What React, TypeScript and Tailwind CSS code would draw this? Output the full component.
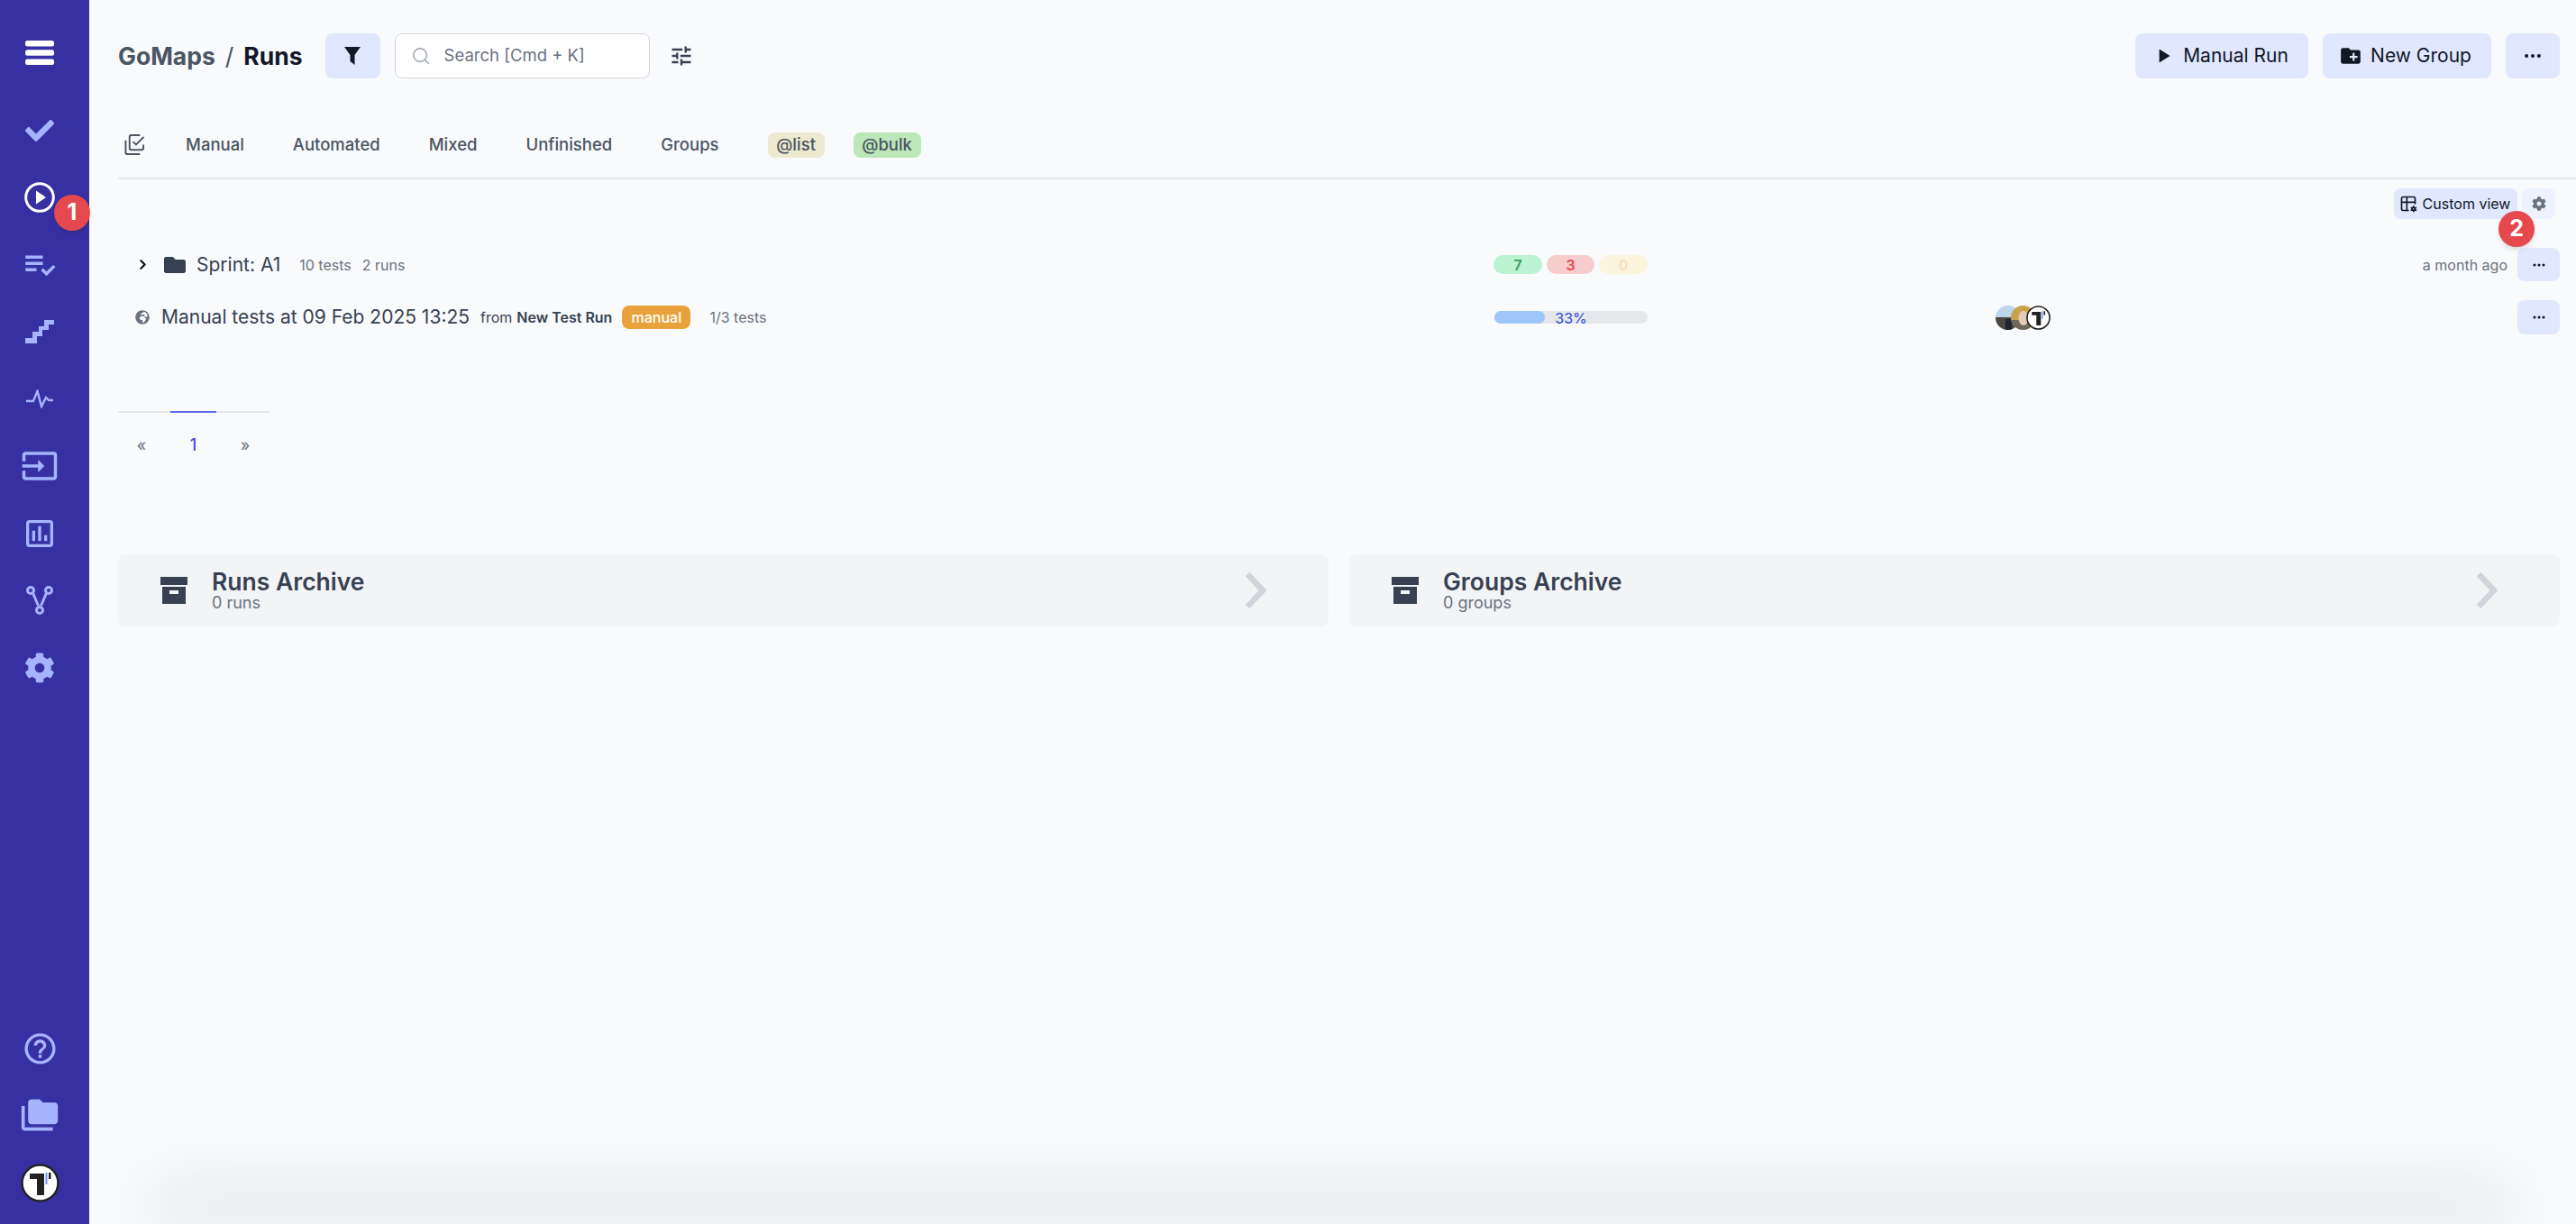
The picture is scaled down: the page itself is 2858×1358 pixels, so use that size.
import { Search } from "lucide-react"
import { BsThreeDots } from "react-icons/bs"
import { FaCheck, FaChevronRight, FaCog, FaFolder, FaGlobeAfrica } from "react-icons/fa"
import {
  MdCreateNewFolder,
  MdFolderCopy,
  MdHelpOutline,
  MdInput,
  MdOutlineAssessment,
  MdOutlineTune,
  MdPlayArrow,
  MdPlaylistAddCheck,
} from "react-icons/md"
import { TbTableOptions } from "react-icons/tb"

const tabs = ["Manual", "Automated", "Mixed", "Unfinished", "Groups"]

function Badge({ n, className }: { n: number; className: string }) {
  return (
    <span
      className={`absolute z-10 grid size-[40px] place-items-center rounded-full bg-[#e5484d] text-[25px] font-bold text-white shadow-md ${className}`}
    >
      {n}
    </span>
  )
}

function TLogo({ className }: { className: string }) {
  return (
    <svg viewBox="0 0 43 43" className={className}>
      <circle cx="21.5" cy="21.5" r="20" fill="#fff" stroke="#222" strokeWidth="2.5" />
      <path d="M10 11H26V35H18V17H10Z" fill="#222" />
      <rect x="27.5" y="10" width="2" height="13" fill="#6f8ff5" />
      <rect x="31" y="10" width="2.5" height="7" fill="#222" />
    </svg>
  )
}

function Archive() {
  return (
    <svg viewBox="0 0 30 30" className="h-[30px] w-[30px]" fill="#374151">
      <rect x="0" y="0" width="30" height="9" />
      <path d="M2 11H28V30H2ZM10 15V19H20V15Z" fillRule="evenodd" />
    </svg>
  )
}

function ArchiveCard({ title, sub }: { title: string; sub: string }) {
  return (
    <div className="flex h-[80px] items-center rounded-lg bg-[#f3f4f6] pl-[47px] pr-[69px]">
      <Archive />
      <div className="ml-[27px] flex flex-col pb-[3px]">
        <span className="text-[26.5px] leading-[30px] font-semibold text-[#374151]">{title}</span>
        <span className="text-[18px] leading-[18px] text-[#6b7280]">{sub}</span>
      </div>
      <svg viewBox="0 0 24 40" className="ml-auto h-[40px] w-[24px]" fill="none" stroke="#d1d5db" strokeWidth="6.5">
        <polyline points="3,2 20,20 3,38" />
      </svg>
    </div>
  )
}

function DotsButton({ height }: { height: string }) {
  return (
    <button className={`grid w-[47px] place-items-center rounded-lg bg-[#e0e7ff] text-[#111827] ${height}`}>
      <BsThreeDots size={16} />
    </button>
  )
}

function Sidebar() {
  const item = "flex h-[74.5px] items-center justify-center pr-[11px] text-[#a5b4fc]"
  return (
    <aside className="relative z-10 flex w-[99px] shrink-0 flex-col justify-between bg-[#3730a3] pb-[8px] pt-[21px]">
      <div className="flex flex-col">
        <div className={`${item} mb-[12px]`}>
          <svg viewBox="0 0 32 27" className="h-[27px] w-[32px]" fill="#fff">
            <rect width="32" height="6.5" rx="2.5" />
            <rect y="10.2" width="32" height="6.5" rx="2.5" />
            <rect y="20.5" width="32" height="6.5" rx="2.5" />
          </svg>
        </div>
        <div className={item}>
          <FaCheck size={32} />
        </div>
        <div className={`${item} relative`}>
          <svg viewBox="0 0 34 34" className="size-[34px]">
            <circle cx="17" cy="17" r="15.3" fill="none" stroke="#fff" strokeWidth="3" />
            <path d="M13 9.5L24 17L13 24.5Z" fill="#fff" />
          </svg>
          <Badge n={1} className="left-[60px] top-[34px]" />
        </div>
        <div className={item}>
          <MdPlaylistAddCheck size={42} />
        </div>
        <div className={item}>
          <svg viewBox="0 0 32 26" className="h-[26px] w-[32px]" fill="currentColor">
            <path d="M0 26V20H8V13H15V7H21V0H32V5H26V11H19V18H13V26Z" />
          </svg>
        </div>
        <div className={item}>
          <svg viewBox="0 0 30 21" className="h-[21px] w-[30px]" fill="none" stroke="currentColor" strokeWidth="2.4">
            <path d="M0 13H8L12.5 2L17 19L22 9L25 12H30" />
          </svg>
        </div>
        <div className={item}>
          <MdInput size={42} />
        </div>
        <div className={item}>
          <MdOutlineAssessment size={40} />
        </div>
        <div className={item}>
          <svg viewBox="0 0 30 32" className="h-[32px] w-[30px]" fill="none" stroke="currentColor" strokeWidth="3">
            <circle cx="5" cy="5" r="3.5" />
            <circle cx="25" cy="5" r="3.5" />
            <circle cx="15" cy="27" r="3.5" />
            <path d="M7.5 8L13.5 22M22.5 8L16.5 22" />
          </svg>
        </div>
        <div className={item}>
          <FaCog size={34} />
        </div>
      </div>
      <div className="flex flex-col">
        <div className={item}>
          <MdHelpOutline size={41} />
        </div>
        <div className={item}>
          <MdFolderCopy size={44} />
        </div>
        <div className={item}>
          <TLogo className="size-[43px]" />
        </div>
      </div>
    </aside>
  )
}

function Header() {
  return (
    <div className="flex h-[50px] items-center">
      <div className="flex items-center gap-[11px] pt-[2px] text-[26.5px] font-bold">
        <span className="text-[#4b5563]">GoMaps</span>
        <span className="font-normal text-[#4b5563]">/</span>
        <span className="text-[#111827]">Runs</span>
      </div>
      <button className="ml-[25px] grid h-[50px] w-[61px] place-items-center rounded-lg bg-[#e0e7ff]">
        <svg viewBox="0 0 18 20" className="h-[20px] w-[18px]" fill="#111827">
          <path d="M0 0H18L11.5 9V20L6.5 16V9Z" />
        </svg>
      </button>
      <div className="ml-[16px] flex h-[50px] w-[283px] items-center rounded-lg border border-[#d1d5db] bg-white pl-[17px]">
        <Search size={22} strokeWidth={1.6} className="text-[#9ca3af]" />
        <span className="ml-[15px] text-[18.5px] text-[#6b7280]">Search [Cmd + K]</span>
      </div>
      <MdOutlineTune size={28} className="ml-[21px] text-[#374151]" />
      <div className="ml-auto flex gap-[16px]">
        <button className="flex h-[50px] w-[192px] items-center justify-center gap-[9px] rounded-lg bg-[#e0e7ff] pr-[4px] text-[21px] text-[#111827]">
          <MdPlayArrow size={26} />
          Manual Run
        </button>
        <button className="flex h-[50px] w-[187px] items-center justify-center gap-[9px] rounded-lg bg-[#e0e7ff] pr-[4px] text-[21px] text-[#111827]">
          <MdCreateNewFolder size={26} />
          New Group
        </button>
        <button className="grid h-[50px] w-[60px] place-items-center rounded-lg bg-[#e0e7ff] text-[#111827]">
          <BsThreeDots size={22} />
        </button>
      </div>
    </div>
  )
}

function Tabs() {
  return (
    <div className="flex h-[112px] items-center border-b-2 border-[#e5e7eb] pl-[7px] pt-[37px] text-[18.5px] font-medium text-[#4b5563]">
      <svg viewBox="0 0 24 24" className="size-[23px]" fill="none" stroke="currentColor" strokeWidth="2">
        <path d="M1.5 7V21a2 2 0 0 0 2 2H18" />
        <path d="M22 12v4a2 2 0 0 1-2 2H8a2 2 0 0 1-2-2V3a2 2 0 0 1 2-2h10" />
        <path d="M10 8.5l3.5 3.5 9-9" />
      </svg>
      <div className="ml-[45px] flex items-center gap-[54px]">
        {tabs.map((t) => (
          <span key={t}>{t}</span>
        ))}
      </div>
      <span className="ml-[54px] flex h-[28px] w-[63px] items-center justify-center rounded-lg bg-[#ede8d0]">@list</span>
      <span className="ml-[32px] flex h-[28px] w-[75px] items-center justify-center rounded-lg bg-[#bbe7b9]">@bulk</span>
    </div>
  )
}

function Rows() {
  return (
    <div className="mt-[32px] grid grid-cols-[1526px_557px_1fr] items-center gap-y-[21px] pr-[18px]">
      <div className="flex items-center pl-[21px]">
        <FaChevronRight size={13} className="text-black" />
        <FaFolder size={24} className="ml-[17px] text-[#374151]" />
        <span className="ml-[12px] text-[21px] text-[#374151]">Sprint: A1</span>
        <span className="ml-[21px] text-[16px] text-[#6b7280]">10 tests</span>
        <span className="ml-[12px] text-[16px] text-[#6b7280]">2 runs</span>
      </div>
      <div className="flex gap-[5px] text-[16px] font-semibold">
        <span className="flex h-[21px] w-[54px] items-center justify-center rounded-full bg-[#bbf3d3] text-[#3c9a67]">7</span>
        <span className="flex h-[21px] w-[53px] items-center justify-center rounded-full bg-[#f7cdcd] text-[#e5484d]">3</span>
        <span className="flex h-[21px] w-[54px] items-center justify-center rounded-full bg-[#fcf5dd] text-[#f6e0bb]">0</span>
      </div>
      <div className="flex items-center justify-end gap-[11px]">
        <span className="text-[16px] text-[#6b7280]">a month ago</span>
        <DotsButton height="h-[37px]" />
      </div>

      <div className="flex items-center pl-[19px]">
        <FaGlobeAfrica size={16} className="text-[#6b7280]" />
        <span className="ml-[13px] text-[21px] text-[#374151]">Manual tests at 09 Feb 2025 13:25</span>
        <span className="ml-[12px] text-[16px] text-[#374151]">from</span>
        <span className="ml-[5px] text-[16px] font-semibold text-[#374151]">New Test Run</span>
        <span className="ml-[11px] flex h-[26px] w-[76px] items-center justify-center rounded-lg bg-[#e9a23b] text-[16px] font-medium text-white">manual</span>
        <span className="ml-[21px] text-[16px] text-[#6b7280]">1/3 tests</span>
      </div>
      <div className="relative ml-[1px] flex h-[14px] w-[170px] items-center justify-center rounded-full bg-[#e5e7eb]">
        <span className="absolute inset-y-0 left-0 w-[56px] rounded-full bg-[#9fc5fb]" />
        <span className="relative pt-[2px] text-[16px] leading-[14px] text-[#2b4bd8]">33%</span>
      </div>
      <div className="flex items-center justify-between">
        <div className="flex items-center">
          <svg viewBox="0 0 27 27" className="-mr-[10px] size-[27px]">
            <clipPath id="a1"><circle cx="13.5" cy="13.5" r="13.5" /></clipPath>
            <g clipPath="url(#a1)">
              <rect width="27" height="27" fill="#bcd5ea" />
              <rect y="13" width="27" height="14" fill="#4a4640" />
              <rect x="11" y="15" width="7" height="12" fill="#1d2433" />
            </g>
          </svg>
          <svg viewBox="0 0 27 27" className="-mr-[10px] size-[27px]">
            <clipPath id="a2"><circle cx="13.5" cy="13.5" r="13.5" /></clipPath>
            <g clipPath="url(#a2)">
              <rect width="27" height="27" fill="#c9a24a" />
              <rect y="16" width="27" height="11" fill="#6f675c" />
              <ellipse cx="14" cy="14" rx="5.5" ry="8" fill="#e3cdb8" />
            </g>
          </svg>
          <TLogo className="relative size-[27px]" />
        </div>
        <DotsButton height="h-[38px]" />
      </div>
    </div>
  )
}

function Pagination() {
  return (
    <div className="mt-[85px] flex w-[168px] border-t-2 border-[#e5e7eb] text-[18px] text-[#6b7280]">
      <span className="w-[58px] pr-[6px] pt-[22px] text-center">«</span>
      <span className="-mt-[2px] w-[51px] border-t-2 border-[#6366f1] pt-[22px] text-center font-medium text-[#4f46e5]">1</span>
      <span className="w-[59px] pl-[5px] pt-[22px] text-center">»</span>
    </div>
  )
}

export default function App() {
  return (
    <div className="relative flex h-screen overflow-hidden bg-[#f9fafc] font-[Inter,sans-serif]">
      <Sidebar />
      <main className="flex min-w-0 flex-1 flex-col">
        <div className="pl-[32px] pr-[18px] pt-[37px]">
          <Header />
        </div>
        <div className="pl-[32px]">
          <Tabs />
        </div>
        <div className="relative flex justify-end gap-[5px] pr-[23px] pt-[10px]">
          <button className="flex h-[34px] w-[137px] items-center justify-center gap-[6px] rounded-lg bg-[#e0e7ff] pr-[2px] text-[16px] text-[#111827]">
            <TbTableOptions size={20} />
            Custom view
          </button>
          <button className="grid h-[34px] w-[37px] place-items-center rounded-lg bg-[#eef2ff] text-[#6b7280]">
            <FaCog size={16} />
          </button>
          <Badge n={2} className="right-[46px] top-[35px]" />
        </div>
        <div className="pl-[32px]">
          <Rows />
          <Pagination />
          <div className="mt-[108px] grid grid-cols-2 gap-[23px] pr-[18px]">
            <ArchiveCard title="Runs Archive" sub="0 runs" />
            <ArchiveCard title="Groups Archive" sub="0 groups" />
          </div>
        </div>
      </main>
      <div className="absolute left-[170px] right-[73px] top-full h-[40px] shadow-[0_-40px_70px_rgba(0,0,0,0.1)]" />
    </div>
  )
}
